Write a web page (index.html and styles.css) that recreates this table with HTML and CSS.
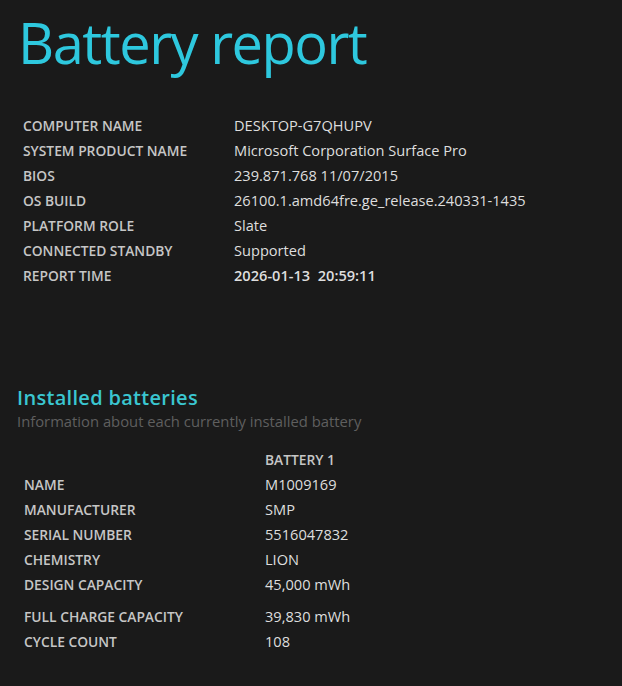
FILE: index.html
```html
<!DOCTYPE html>
<html>
<head>
<meta charset="utf-8">
<link rel="stylesheet" href="styles.css">
</head>
<body>
<h1 class="title">Battery report</h1>
<table class="info">
  <tr><td class="label">COMPUTER NAME</td><td class="value">DESKTOP-G7QHUPV</td></tr>
  <tr><td class="label">SYSTEM PRODUCT NAME</td><td class="value">Microsoft Corporation Surface Pro</td></tr>
  <tr><td class="label">BIOS</td><td class="value">239.871.768 11/07/2015</td></tr>
  <tr><td class="label">OS BUILD</td><td class="value">26100.1.amd64fre.ge_release.240331-1435</td></tr>
  <tr><td class="label">PLATFORM ROLE</td><td class="value">Slate</td></tr>
  <tr><td class="label">CONNECTED STANDBY</td><td class="value">Supported</td></tr>
  <tr><td class="label">REPORT TIME</td><td class="value strong">2026-01-13&nbsp; 20:59:11</td></tr>
</table>
<h2 class="section">Installed batteries</h2>
<div class="subtitle">Information about each currently installed battery</div>
<table class="batteries">
  <tr><td class="label"></td><td class="colhead">BATTERY 1</td></tr>
  <tr><td class="label">NAME</td><td class="value">M1009169</td></tr>
  <tr><td class="label">MANUFACTURER</td><td class="value">SMP</td></tr>
  <tr><td class="label">SERIAL NUMBER</td><td class="value">5516047832</td></tr>
  <tr><td class="label">CHEMISTRY</td><td class="value">LION</td></tr>
  <tr><td class="label">DESIGN CAPACITY</td><td class="value">45,000 mWh</td></tr>
  <tr class="spaced"><td class="label">FULL CHARGE CAPACITY</td><td class="value">39,830 mWh</td></tr>
  <tr><td class="label">CYCLE COUNT</td><td class="value">108</td></tr>
</table>
</body>
</html>
```
FILE: styles.css
```css
html, body {
  margin: 0;
  background: #1a1a1a;
}
body {
  font-family: "Open Sans", "Noto Sans", sans-serif;
  color: #dcdcdc;
  padding: 0 0 0 17px;
}
.title {
  margin: 0;
  padding: 4px 0 0 1px;
  font-size: 56px;
  font-weight: 400;
  line-height: 76px;
  color: #2ec8de;
  letter-spacing: -1.5px;
}
table {
  border-collapse: collapse;
}
td {
  padding: 0;
  line-height: 25px;
  vertical-align: baseline;
  white-space: nowrap;
}
.info {
  margin: 33px 0 0 6px;
}
.info .label {
  width: 211px;
}
.label {
  font-size: 13.8px;
  font-weight: 600;
  color: #c6c6c6;
}
.value {
  font-size: 14.6px;
  color: #dedede;
}
.strong {
  font-weight: 600;
}
.section {
  margin: 98px 0 0 0;
  font-size: 20px;
  font-weight: 600;
  line-height: 24px;
  color: #3ac6d0;
  letter-spacing: 0.3px;
}
.subtitle {
  font-size: 14.8px;
  color: #5f5f5f;
  line-height: 22px;
}
.batteries {
  margin: 15px 0 0 7px;
}
.batteries .label {
  width: 241px;
}
.colhead {
  font-size: 13.8px;
  font-weight: 600;
  color: #c6c6c6;
}
.spaced td {
  padding-top: 7px;
}
```
